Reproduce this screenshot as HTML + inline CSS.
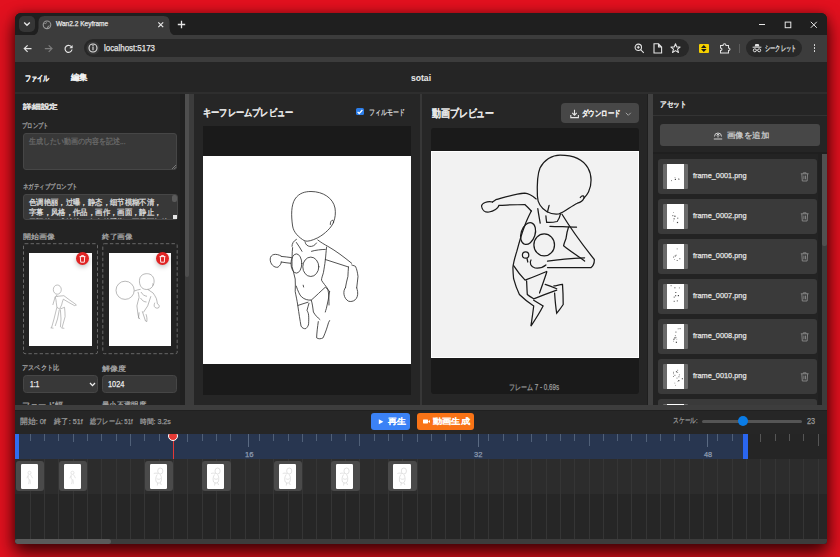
<!DOCTYPE html>
<html lang="ja"><head><meta charset="utf-8">
<style>
*{box-sizing:border-box;margin:0;padding:0}
html,body{width:840px;height:557px;overflow:hidden}
body{background:#e2111f;font-family:"Liberation Sans",sans-serif;position:relative;color:#ddd}
.a{position:absolute}
.t{position:absolute;white-space:pre;line-height:1;transform-origin:0 0;font-family:"Liberation Sans",sans-serif;-webkit-text-stroke:0.25px currentColor}
#win{position:absolute;left:15px;top:13px;width:812px;height:531px;background:#1f1f1f;border-radius:6px 6px 3px 3px;overflow:hidden;box-shadow:0 9px 18px 1px rgba(30,0,0,.8),0 0 9px rgba(40,0,0,.35)}
#pg{position:absolute;left:-15px;top:-13px;width:840px;height:557px}
svg{position:absolute;overflow:visible}

</style></head><body>
<div id="win"><div id="pg">
<div class="a" style="left:15px;top:13px;width:812.00px;height:22.00px;background:#1f1f1f;"></div>
<div class="a" style="left:19px;top:16px;width:16.00px;height:16.00px;background:#363636;border-radius:5px"></div>
<svg style="left:23px;top:21px" width="8" height="6"><path d="M1.2 1.5 L4 4.2 L6.8 1.5" stroke="#e6e6e6" stroke-width="1.4" fill="none"/></svg>
<svg style="left:30px;top:15px" width="150" height="21"><path d="M0 21 Q8 21 8.5 13 L8.5 7 Q8.5 1 14.5 1 L133.5 1 Q139.5 1 139.5 7 L139.5 13 Q140 21 148 21 Z" fill="#3c3c3c"/></svg>
<svg style="left:42px;top:19.5px" width="10" height="10"><circle cx="5" cy="4.8" r="3.8" fill="none" stroke="#9a9a9a" stroke-width="1.1"/><path d="M2.2 3.2 Q4 4 4.8 2.5 M5.5 8.3 Q5.3 6 7.5 5.8" stroke="#9a9a9a" stroke-width="1" fill="none"/></svg>
<svg style="left:157px;top:20.5px" width="8" height="8"><path d="M1.3 1.3 L6.2 6.2 M6.2 1.3 L1.3 6.2" stroke="#e6e6e6" stroke-width="1.2"/></svg>
<svg style="left:176.5px;top:19.5px" width="9" height="9"><path d="M4.5 0.8 V8.2 M0.8 4.5 H8.2" stroke="#e6e6e6" stroke-width="1.3"/></svg>
<div class="a" style="left:759px;top:23.5px;width:6.00px;height:1.10px;background:#e6e6e6;"></div>
<svg style="left:784px;top:20.5px" width="8" height="8"><rect x="1.2" y="1.1" width="5.6" height="5.6" fill="none" stroke="#e6e6e6" stroke-width="1"/></svg>
<svg style="left:810px;top:20.5px" width="8" height="8"><path d="M0.8 0.8 L6.8 6.8 M6.8 0.8 L0.8 6.8" stroke="#e6e6e6" stroke-width="1"/></svg>
<div class="a" style="left:15px;top:35px;width:812.00px;height:27.00px;background:#3c3c3c;"></div>
<svg style="left:23px;top:44px" width="10" height="10"><path d="M8.5 4.6 H1.5 M4.6 1.3 L1.3 4.6 L4.6 7.9" stroke="#e3e3e3" stroke-width="1.2" fill="none"/></svg>
<svg style="left:44px;top:44px" width="10" height="10"><path d="M0.8 4.6 H7.8 M4.7 1.3 L8 4.6 L4.7 7.9" stroke="#7c7c7c" stroke-width="1.2" fill="none"/></svg>
<svg style="left:64px;top:44px" width="10" height="10"><path d="M7.8 3.6 A3.5 3.5 0 1 0 8 5.5" stroke="#e3e3e3" stroke-width="1.2" fill="none"/><path d="M8.6 0.9 V4.2 H5.3 Z" fill="#e3e3e3"/></svg>
<div class="a" style="left:83.8px;top:39px;width:605.50px;height:18.40px;background:#282828;border-radius:9.5px"></div>
<svg style="left:86px;top:41.2px" width="14" height="14"><circle cx="7" cy="7" r="6.6" fill="#383838"/><circle cx="7" cy="7" r="4" fill="none" stroke="#e3e3e3" stroke-width="1.1"/><path d="M7 5.6 V9.2" stroke="#e3e3e3" stroke-width="1.1"/><circle cx="7" cy="4.4" r="0.6" fill="#e3e3e3"/></svg>
<svg style="left:634px;top:43px" width="11" height="11"><circle cx="4.3" cy="4.3" r="3.2" fill="none" stroke="#e3e3e3" stroke-width="1.1"/><path d="M6.6 6.6 L9.8 9.8 M2.8 4.3 H5.8 M4.3 2.8 V5.8" stroke="#e3e3e3" stroke-width="1.1"/></svg>
<svg style="left:653px;top:43px" width="10" height="11"><path d="M1 0.8 H5.5 L8.6 3.9 V10 H1 Z M5.5 0.8 V3.9 H8.6" fill="none" stroke="#e3e3e3" stroke-width="1.1"/></svg>
<svg style="left:670px;top:43px" width="11" height="11"><path d="M5.5 0.8 L6.8 4 L10.1 4.1 L7.5 6.2 L8.5 9.5 L5.5 7.6 L2.5 9.5 L3.5 6.2 L0.9 4.1 L4.2 4 Z" fill="none" stroke="#e3e3e3" stroke-width="1.05" stroke-linejoin="round"/></svg>
<div class="a" style="left:699.3px;top:43.9px;width:9.60px;height:9.00px;background:#f5d000;border-radius:1px"></div>
<svg style="left:699.3px;top:43.9px" width="10" height="9"><path d="M4.8 1 L7.6 4 H2 Z M2 5 H7.6 L4.8 8 Z" fill="#1a1a1a"/><path d="M1.5 4.5 H8.1" stroke="#f5d000" stroke-width="0.6"/></svg>
<svg style="left:719px;top:43px" width="12" height="11"><path d="M1.5 2.5 H4 Q4 0.8 5.5 0.8 Q7 0.8 7 2.5 H9.5 V5 Q11 5 11 6.3 Q11 7.6 9.5 7.6 V10 H1.5 V7.6 Q3 7.6 3 6.3 Q3 5 1.5 5 Z" fill="none" stroke="#e3e3e3" stroke-width="1.05"/></svg>
<div class="a" style="left:739.2px;top:44px;width:1.00px;height:9.00px;background:#5a5a5a;"></div>
<div class="a" style="left:745.6px;top:39px;width:56.30px;height:18.40px;background:#282828;border-radius:9.5px"></div>
<svg style="left:752px;top:43px" width="10" height="10"><path d="M2.6 3.5 L3.4 0.9 H6.6 L7.4 3.5 Z" fill="#e3e3e3"/><rect x="0.6" y="3.7" width="8.8" height="1" fill="#e3e3e3"/><circle cx="2.8" cy="7.3" r="1.5" fill="none" stroke="#e3e3e3" stroke-width="1"/><circle cx="7.2" cy="7.3" r="1.5" fill="none" stroke="#e3e3e3" stroke-width="1"/><path d="M4.3 7.1 H5.7" stroke="#e3e3e3" stroke-width="0.9"/></svg>
<div class="a" style="left:813.6px;top:44.300000000000004px;width:1.8px;height:1.8px;border-radius:1px;background:#e3e3e3"></div>
<div class="a" style="left:813.6px;top:47.300000000000004px;width:1.8px;height:1.8px;border-radius:1px;background:#e3e3e3"></div>
<div class="a" style="left:813.6px;top:50.4px;width:1.8px;height:1.8px;border-radius:1px;background:#e3e3e3"></div>
<div class="a" style="left:15px;top:62px;width:812.00px;height:30.00px;background:#252525;"></div>
<div class="a" style="left:15px;top:92px;width:812.00px;height:2.00px;background:#2e2e2e;"></div>
<div class="a" style="left:15px;top:94px;width:170.00px;height:311.00px;background:#232323;"></div>
<div class="a" style="left:179.5px;top:94px;width:5.50px;height:311.00px;background:#202020;"></div>
<div class="a" style="left:184.5px;top:94px;width:9.50px;height:311.00px;background:#3c3c3c;"></div>
<div class="a" style="left:184.5px;top:94px;width:4.80px;height:183.00px;background:#4e4e4e;border-radius:0 0 2.5px 2.5px"></div>
<div class="a" style="left:22.9px;top:132.9px;width:154.60px;height:37.30px;background:#383838;border:1px solid #464646;border-radius:3px"></div>
<svg style="left:171px;top:164px" width="6" height="6"><path d="M5 1 L1 5 M5 3.2 L3.2 5" stroke="#8a8a8a" stroke-width="0.8"/></svg>
<div class="a" style="left:22.7px;top:194.2px;width:154.90px;height:25.70px;background:#383838;border:1px solid #464646;border-radius:3px"></div>
<div class="a" style="left:23.7px;top:195px;width:147.5px;height:24.3px;overflow:hidden"><div class="t" style="left:5.100000000000001px;top:3.90px;font-size:8px;color:#e0e0e0;transform:scaleX(0.919)">色调艳丽，过曝，静态，细节模糊不清，</div><div class="t" style="left:5.100000000000001px;top:14.10px;font-size:8px;color:#e0e0e0;transform:scaleX(0.919)">字幕，风格，作品，画作，画面，静止，</div><div class="t" style="left:5.100000000000001px;top:24.30px;font-size:8px;color:#e0e0e0;transform:scaleX(0.919)">丑陋的，残缺的，多余的手指，画得不好的</div></div>
<div class="a" style="left:172px;top:195.2px;width:5.00px;height:7.10px;background:#5a5a5a;border-radius:2px"></div>
<div class="a" style="left:172.5px;top:214.8px;width:4.50px;height:4.70px;background:#e6e6e6;"></div>
<svg style="left:0;top:0" width="840" height="557"><rect x="23.5" y="243.7" width="74" height="110" rx="1.5" fill="none" stroke="#686868" stroke-width="1" stroke-dasharray="3.4 2.2"/><rect x="102.8" y="243.7" width="74.4" height="110" rx="1.5" fill="none" stroke="#686868" stroke-width="1" stroke-dasharray="3.4 2.2"/></svg>
<div class="a" style="left:29px;top:253.4px;width:62.50px;height:92.60px;background:#ffffff;"></div>
<div class="a" style="left:108.7px;top:253.4px;width:62.50px;height:92.60px;background:#ffffff;"></div>
<div class="a" style="left:76.4px;top:252.2px;width:13px;height:13px;border-radius:50%;background:#e02424;box-shadow:0 2px 5px rgba(0,0,0,.25)"></div>
<svg style="left:79.4px;top:254.7px" width="7" height="8"><path d="M0.6 1.6 H6.4 M2.4 1.6 V0.6 H4.6 V1.6 M1.3 1.6 L1.7 7.2 H5.3 L5.7 1.6" fill="none" stroke="#fff" stroke-width="0.9"/></svg>
<div class="a" style="left:156.1px;top:252.2px;width:13px;height:13px;border-radius:50%;background:#e02424;box-shadow:0 2px 5px rgba(0,0,0,.25)"></div>
<svg style="left:159.1px;top:254.7px" width="7" height="8"><path d="M0.6 1.6 H6.4 M2.4 1.6 V0.6 H4.6 V1.6 M1.3 1.6 L1.7 7.2 H5.3 L5.7 1.6" fill="none" stroke="#fff" stroke-width="0.9"/></svg>
<div class="a" style="left:22.9px;top:375.4px;width:75.00px;height:17.20px;background:#383838;border:1px solid #464646;border-radius:3.5px"></div>
<svg style="left:88.5px;top:381.5px" width="7" height="5"><path d="M1 1 L3.5 3.6 L6 1" stroke="#f0f0f0" stroke-width="1.3" fill="none"/></svg>
<div class="a" style="left:102.4px;top:375.4px;width:75.10px;height:17.20px;background:#383838;border:1px solid #464646;border-radius:3.5px"></div>
<div class="a" style="left:194px;top:94px;width:225.60px;height:311.00px;background:#262626;"></div>
<div class="a" style="left:203.3px;top:125.5px;width:207.90px;height:269.20px;background:#1a1a1a;"></div>
<div class="a" style="left:203.3px;top:156px;width:207.90px;height:208.00px;background:#ffffff;"></div>
<div class="a" style="left:356px;top:108.1px;width:7.80px;height:7.30px;background:#2b7de9;border-radius:1.5px"></div>
<svg style="left:356px;top:108.1px" width="8" height="8"><path d="M1.6 3.8 L3.2 5.5 L6.4 2" stroke="#fff" stroke-width="1.2" fill="none"/></svg>
<div class="a" style="left:419.6px;top:94px;width:2.80px;height:311.00px;background:#2a2a2a;"></div>
<div class="a" style="left:420.2px;top:94px;width:1.60px;height:311.00px;background:#373737;"></div>
<div class="a" style="left:422.4px;top:94px;width:225.00px;height:311.00px;background:#262626;"></div>
<div class="a" style="left:561.2px;top:103.2px;width:77.60px;height:19.80px;background:#474747;border-radius:4px"></div>
<svg style="left:569.5px;top:108.5px" width="10" height="10"><path d="M4.5 0.8 V6 M2.2 3.8 L4.5 6.1 L6.8 3.8 M0.8 6 V8.6 H8.4 V6" fill="none" stroke="#e6e6e6" stroke-width="1.1"/></svg>
<svg style="left:624.5px;top:111.5px" width="7" height="5"><path d="M0.8 0.8 L3.3 3.3 L5.8 0.8" stroke="#aaa" stroke-width="0.9" fill="none"/></svg>
<div class="a" style="left:431.2px;top:128px;width:207.40px;height:266.30px;background:#1a1a1a;border-radius:3px"></div>
<div class="a" style="left:431.3px;top:151px;width:207.30px;height:206.80px;background:#f2f2f2;border:1px solid #fff"></div>
<div class="a" style="left:647.6px;top:94px;width:5.40px;height:311.00px;background:#414141;"></div>
<div class="a" style="left:653px;top:94px;width:174.00px;height:311.00px;background:#252525;"></div>
<div class="a" style="left:652.8px;top:115.3px;width:174.20px;height:1.00px;background:#333333;"></div>
<div class="a" style="left:660px;top:123.7px;width:159.60px;height:22.10px;background:#474747;border-radius:3px"></div>
<svg style="left:712.5px;top:131px" width="10" height="9"><path d="M1.5 5.5 A3.5 3.5 0 0 1 8.5 5.5" fill="none" stroke="#d0d0d0" stroke-width="1"/><path d="M5 3 V6.5 M3.6 4.4 L5 3 L6.4 4.4 M0.8 8 H9.2" fill="none" stroke="#d0d0d0" stroke-width="1"/></svg>
<div class="a" style="left:652.8px;top:152.3px;width:174.20px;height:1.30px;background:#1f1f1f;"></div>
<div class="a" style="left:652.8px;top:153.6px;width:174.20px;height:251.40px;background:#232323;"></div>
<div class="a" style="left:817.5px;top:153.6px;width:4.90px;height:251.40px;background:#202020;"></div>
<div class="a" style="left:822.4px;top:153.6px;width:4.60px;height:251.40px;background:#3c3c3c;"></div>
<div class="a" style="left:822.4px;top:154px;width:4.40px;height:91.80px;background:#505050;border-radius:0 0 2px 2px"></div>
<div class="a" style="left:658px;top:159px;width:159.00px;height:34.50px;background:#3a3a3a;border-radius:3px"></div>
<div class="a" style="left:663.2px;top:163.7px;width:25.00px;height:25.00px;background:#6a6a6a;border-radius:1px"></div>
<div class="a" style="left:666.9px;top:163.7px;width:17.20px;height:25.00px;background:#ffffff;"></div>
<svg style="left:800px;top:172px" width="10" height="10"><path d="M0.8 1.8 H8.6 M3.3 1.8 V0.8 H6.1 V1.8 M1.8 1.8 L2.3 9 H7.1 L7.6 1.8 M3.9 3.6 V7.3 M5.5 3.6 V7.3" fill="none" stroke="#8a8a8a" stroke-width="0.9"/></svg>
<div class="a" style="left:658px;top:199px;width:159.00px;height:34.50px;background:#3a3a3a;border-radius:3px"></div>
<div class="a" style="left:663.2px;top:203.7px;width:25.00px;height:25.00px;background:#6a6a6a;border-radius:1px"></div>
<div class="a" style="left:666.9px;top:203.7px;width:17.20px;height:25.00px;background:#ffffff;"></div>
<svg style="left:800px;top:212px" width="10" height="10"><path d="M0.8 1.8 H8.6 M3.3 1.8 V0.8 H6.1 V1.8 M1.8 1.8 L2.3 9 H7.1 L7.6 1.8 M3.9 3.6 V7.3 M5.5 3.6 V7.3" fill="none" stroke="#8a8a8a" stroke-width="0.9"/></svg>
<div class="a" style="left:658px;top:239px;width:159.00px;height:34.50px;background:#3a3a3a;border-radius:3px"></div>
<div class="a" style="left:663.2px;top:243.7px;width:25.00px;height:25.00px;background:#6a6a6a;border-radius:1px"></div>
<div class="a" style="left:666.9px;top:243.7px;width:17.20px;height:25.00px;background:#ffffff;"></div>
<svg style="left:800px;top:252px" width="10" height="10"><path d="M0.8 1.8 H8.6 M3.3 1.8 V0.8 H6.1 V1.8 M1.8 1.8 L2.3 9 H7.1 L7.6 1.8 M3.9 3.6 V7.3 M5.5 3.6 V7.3" fill="none" stroke="#8a8a8a" stroke-width="0.9"/></svg>
<div class="a" style="left:658px;top:279px;width:159.00px;height:34.50px;background:#3a3a3a;border-radius:3px"></div>
<div class="a" style="left:663.2px;top:283.7px;width:25.00px;height:25.00px;background:#6a6a6a;border-radius:1px"></div>
<div class="a" style="left:666.9px;top:283.7px;width:17.20px;height:25.00px;background:#ffffff;"></div>
<svg style="left:800px;top:292px" width="10" height="10"><path d="M0.8 1.8 H8.6 M3.3 1.8 V0.8 H6.1 V1.8 M1.8 1.8 L2.3 9 H7.1 L7.6 1.8 M3.9 3.6 V7.3 M5.5 3.6 V7.3" fill="none" stroke="#8a8a8a" stroke-width="0.9"/></svg>
<div class="a" style="left:658px;top:319px;width:159.00px;height:34.50px;background:#3a3a3a;border-radius:3px"></div>
<div class="a" style="left:663.2px;top:323.7px;width:25.00px;height:25.00px;background:#6a6a6a;border-radius:1px"></div>
<div class="a" style="left:666.9px;top:323.7px;width:17.20px;height:25.00px;background:#ffffff;"></div>
<svg style="left:800px;top:332px" width="10" height="10"><path d="M0.8 1.8 H8.6 M3.3 1.8 V0.8 H6.1 V1.8 M1.8 1.8 L2.3 9 H7.1 L7.6 1.8 M3.9 3.6 V7.3 M5.5 3.6 V7.3" fill="none" stroke="#8a8a8a" stroke-width="0.9"/></svg>
<div class="a" style="left:658px;top:359px;width:159.00px;height:34.50px;background:#3a3a3a;border-radius:3px"></div>
<div class="a" style="left:663.2px;top:363.7px;width:25.00px;height:25.00px;background:#6a6a6a;border-radius:1px"></div>
<div class="a" style="left:666.9px;top:363.7px;width:17.20px;height:25.00px;background:#ffffff;"></div>
<svg style="left:800px;top:372px" width="10" height="10"><path d="M0.8 1.8 H8.6 M3.3 1.8 V0.8 H6.1 V1.8 M1.8 1.8 L2.3 9 H7.1 L7.6 1.8 M3.9 3.6 V7.3 M5.5 3.6 V7.3" fill="none" stroke="#8a8a8a" stroke-width="0.9"/></svg>
<div class="a" style="left:658px;top:399px;width:159.00px;height:34.50px;background:#3a3a3a;border-radius:3px"></div>
<div class="a" style="left:663.2px;top:403.7px;width:25.00px;height:25.00px;background:#6a6a6a;border-radius:1px"></div>
<div class="a" style="left:666.9px;top:403.7px;width:17.20px;height:25.00px;background:#ffffff;"></div>
<svg style="left:800px;top:412px" width="10" height="10"><path d="M0.8 1.8 H8.6 M3.3 1.8 V0.8 H6.1 V1.8 M1.8 1.8 L2.3 9 H7.1 L7.6 1.8 M3.9 3.6 V7.3 M5.5 3.6 V7.3" fill="none" stroke="#8a8a8a" stroke-width="0.9"/></svg>
<div class="a" style="left:15px;top:405px;width:812.00px;height:4.50px;background:#3d3d3d;"></div>
<div class="a" style="left:15px;top:409.5px;width:812.00px;height:24.50px;background:#262626;"></div>
<div class="a" style="left:15px;top:409.5px;width:812.00px;height:1.50px;background:#202020;"></div>
<div class="a" style="left:371.25px;top:412.75px;width:38.75px;height:17.50px;background:#3b82f6;border-radius:3px"></div>
<svg style="left:377.5px;top:418.5px" width="6" height="6"><path d="M0.8 0.3 L5.4 2.8 L0.8 5.3 Z" fill="#fff"/></svg>
<div class="a" style="left:417.25px;top:412.75px;width:56.50px;height:17.50px;background:#f97316;border-radius:3px"></div>
<svg style="left:423px;top:419px" width="8" height="5"><rect x="0" y="0.4" width="5" height="4" rx="0.6" fill="#fff"/><path d="M5 2.4 L7 0.9 V3.9 Z" fill="#fff"/></svg>
<div class="a" style="left:702.1px;top:419.6px;width:99.60px;height:3.60px;background:#555555;border-radius:2px"></div>
<div class="a" style="left:738px;top:416.1px;width:10px;height:10px;border-radius:50%;background:#0a7ce6"></div>
<div class="a" style="left:15px;top:434px;width:812.00px;height:24.50px;background:#252525;"></div>
<div class="a" style="left:15px;top:434px;width:728.00px;height:24.50px;background:#283650;"></div>
<div class="a" style="left:15.3px;top:434px;width:1.00px;height:12.30px;background:#506078;"></div>
<div class="a" style="left:29.63px;top:434px;width:1.00px;height:6.60px;background:#506078;"></div>
<div class="a" style="left:43.96px;top:434px;width:1.00px;height:6.60px;background:#506078;"></div>
<div class="a" style="left:58.29px;top:434px;width:1.00px;height:6.60px;background:#506078;"></div>
<div class="a" style="left:72.62px;top:434px;width:1.00px;height:8.00px;background:#506078;"></div>
<div class="a" style="left:86.95px;top:434px;width:1.00px;height:6.60px;background:#506078;"></div>
<div class="a" style="left:101.28px;top:434px;width:1.00px;height:6.60px;background:#506078;"></div>
<div class="a" style="left:115.61px;top:434px;width:1.00px;height:6.60px;background:#506078;"></div>
<div class="a" style="left:129.94px;top:434px;width:1.00px;height:12.30px;background:#506078;"></div>
<div class="a" style="left:144.27px;top:434px;width:1.00px;height:6.60px;background:#506078;"></div>
<div class="a" style="left:158.6px;top:434px;width:1.00px;height:6.60px;background:#506078;"></div>
<div class="a" style="left:172.93px;top:434px;width:1.00px;height:6.60px;background:#506078;"></div>
<div class="a" style="left:187.26px;top:434px;width:1.00px;height:8.00px;background:#506078;"></div>
<div class="a" style="left:201.59px;top:434px;width:1.00px;height:6.60px;background:#506078;"></div>
<div class="a" style="left:215.92px;top:434px;width:1.00px;height:6.60px;background:#506078;"></div>
<div class="a" style="left:230.25px;top:434px;width:1.00px;height:6.60px;background:#506078;"></div>
<div class="a" style="left:258.91px;top:434px;width:1.00px;height:6.60px;background:#506078;"></div>
<div class="a" style="left:273.24px;top:434px;width:1.00px;height:6.60px;background:#506078;"></div>
<div class="a" style="left:287.57px;top:434px;width:1.00px;height:6.60px;background:#506078;"></div>
<div class="a" style="left:301.9px;top:434px;width:1.00px;height:8.00px;background:#506078;"></div>
<div class="a" style="left:316.23px;top:434px;width:1.00px;height:6.60px;background:#506078;"></div>
<div class="a" style="left:330.56px;top:434px;width:1.00px;height:6.60px;background:#506078;"></div>
<div class="a" style="left:344.89px;top:434px;width:1.00px;height:6.60px;background:#506078;"></div>
<div class="a" style="left:359.22px;top:434px;width:1.00px;height:12.30px;background:#506078;"></div>
<div class="a" style="left:373.55px;top:434px;width:1.00px;height:6.60px;background:#506078;"></div>
<div class="a" style="left:387.88px;top:434px;width:1.00px;height:6.60px;background:#506078;"></div>
<div class="a" style="left:402.21px;top:434px;width:1.00px;height:6.60px;background:#506078;"></div>
<div class="a" style="left:416.54px;top:434px;width:1.00px;height:8.00px;background:#506078;"></div>
<div class="a" style="left:430.87px;top:434px;width:1.00px;height:6.60px;background:#506078;"></div>
<div class="a" style="left:445.2px;top:434px;width:1.00px;height:6.60px;background:#506078;"></div>
<div class="a" style="left:459.53px;top:434px;width:1.00px;height:6.60px;background:#506078;"></div>
<div class="a" style="left:488.19px;top:434px;width:1.00px;height:6.60px;background:#506078;"></div>
<div class="a" style="left:502.52px;top:434px;width:1.00px;height:6.60px;background:#506078;"></div>
<div class="a" style="left:516.85px;top:434px;width:1.00px;height:6.60px;background:#506078;"></div>
<div class="a" style="left:531.18px;top:434px;width:1.00px;height:8.00px;background:#506078;"></div>
<div class="a" style="left:545.51px;top:434px;width:1.00px;height:6.60px;background:#506078;"></div>
<div class="a" style="left:559.84px;top:434px;width:1.00px;height:6.60px;background:#506078;"></div>
<div class="a" style="left:574.17px;top:434px;width:1.00px;height:6.60px;background:#506078;"></div>
<div class="a" style="left:588.5px;top:434px;width:1.00px;height:12.30px;background:#506078;"></div>
<div class="a" style="left:602.83px;top:434px;width:1.00px;height:6.60px;background:#506078;"></div>
<div class="a" style="left:617.16px;top:434px;width:1.00px;height:6.60px;background:#506078;"></div>
<div class="a" style="left:631.49px;top:434px;width:1.00px;height:6.60px;background:#506078;"></div>
<div class="a" style="left:645.82px;top:434px;width:1.00px;height:8.00px;background:#506078;"></div>
<div class="a" style="left:660.15px;top:434px;width:1.00px;height:6.60px;background:#506078;"></div>
<div class="a" style="left:674.48px;top:434px;width:1.00px;height:6.60px;background:#506078;"></div>
<div class="a" style="left:688.81px;top:434px;width:1.00px;height:6.60px;background:#506078;"></div>
<div class="a" style="left:717.47px;top:434px;width:1.00px;height:6.60px;background:#506078;"></div>
<div class="a" style="left:731.8px;top:434px;width:1.00px;height:6.60px;background:#506078;"></div>
<div class="a" style="left:760.46px;top:434px;width:1.00px;height:8.00px;background:#555555;"></div>
<div class="a" style="left:774.79px;top:434px;width:1.00px;height:6.60px;background:#555555;"></div>
<div class="a" style="left:789.12px;top:434px;width:1.00px;height:6.60px;background:#555555;"></div>
<div class="a" style="left:803.45px;top:434px;width:1.00px;height:6.60px;background:#555555;"></div>
<div class="a" style="left:817.78px;top:434px;width:1.00px;height:12.30px;background:#555555;"></div>
<div class="a" style="left:248.1px;top:434px;width:1.00px;height:12.80px;background:#5a6a82;"></div>
<div class="a" style="left:477.5px;top:434px;width:1.00px;height:12.80px;background:#5a6a82;"></div>
<div class="a" style="left:706.8px;top:434px;width:1.00px;height:12.80px;background:#5a6a82;"></div>
<div class="a" style="left:15px;top:434px;width:3.70px;height:24.50px;background:#2f6df0;"></div>
<div class="a" style="left:742.9px;top:434px;width:5.30px;height:24.50px;background:#2a66f0;"></div>
<div class="a" style="left:15px;top:458.5px;width:812.00px;height:35.00px;background:#2c2c2c;"></div>
<div class="a" style="left:15px;top:493.5px;width:812.00px;height:45.50px;background:#262626;"></div>
<div class="a" style="left:29.63px;top:458.5px;width:1.00px;height:80.50px;background:#353535;"></div>
<div class="a" style="left:43.96px;top:458.5px;width:1.00px;height:80.50px;background:#353535;"></div>
<div class="a" style="left:58.29px;top:458.5px;width:1.00px;height:80.50px;background:#353535;"></div>
<div class="a" style="left:72.62px;top:458.5px;width:1.00px;height:80.50px;background:#353535;"></div>
<div class="a" style="left:86.95px;top:458.5px;width:1.00px;height:80.50px;background:#353535;"></div>
<div class="a" style="left:101.28px;top:458.5px;width:1.00px;height:80.50px;background:#353535;"></div>
<div class="a" style="left:115.61px;top:458.5px;width:1.00px;height:80.50px;background:#353535;"></div>
<div class="a" style="left:129.94px;top:458.5px;width:1.00px;height:80.50px;background:#353535;"></div>
<div class="a" style="left:144.27px;top:458.5px;width:1.00px;height:80.50px;background:#353535;"></div>
<div class="a" style="left:158.6px;top:458.5px;width:1.00px;height:80.50px;background:#353535;"></div>
<div class="a" style="left:172.93px;top:458.5px;width:1.00px;height:80.50px;background:#353535;"></div>
<div class="a" style="left:187.26px;top:458.5px;width:1.00px;height:80.50px;background:#353535;"></div>
<div class="a" style="left:201.59px;top:458.5px;width:1.00px;height:80.50px;background:#353535;"></div>
<div class="a" style="left:215.92px;top:458.5px;width:1.00px;height:80.50px;background:#353535;"></div>
<div class="a" style="left:230.25px;top:458.5px;width:1.00px;height:80.50px;background:#353535;"></div>
<div class="a" style="left:244.58px;top:458.5px;width:1.00px;height:80.50px;background:#353535;"></div>
<div class="a" style="left:258.91px;top:458.5px;width:1.00px;height:80.50px;background:#353535;"></div>
<div class="a" style="left:273.24px;top:458.5px;width:1.00px;height:80.50px;background:#353535;"></div>
<div class="a" style="left:287.57px;top:458.5px;width:1.00px;height:80.50px;background:#353535;"></div>
<div class="a" style="left:301.9px;top:458.5px;width:1.00px;height:80.50px;background:#353535;"></div>
<div class="a" style="left:316.23px;top:458.5px;width:1.00px;height:80.50px;background:#353535;"></div>
<div class="a" style="left:330.56px;top:458.5px;width:1.00px;height:80.50px;background:#353535;"></div>
<div class="a" style="left:344.89px;top:458.5px;width:1.00px;height:80.50px;background:#353535;"></div>
<div class="a" style="left:359.22px;top:458.5px;width:1.00px;height:80.50px;background:#353535;"></div>
<div class="a" style="left:373.55px;top:458.5px;width:1.00px;height:80.50px;background:#353535;"></div>
<div class="a" style="left:387.88px;top:458.5px;width:1.00px;height:80.50px;background:#353535;"></div>
<div class="a" style="left:402.21px;top:458.5px;width:1.00px;height:80.50px;background:#353535;"></div>
<div class="a" style="left:416.54px;top:458.5px;width:1.00px;height:80.50px;background:#353535;"></div>
<div class="a" style="left:430.87px;top:458.5px;width:1.00px;height:80.50px;background:#353535;"></div>
<div class="a" style="left:445.2px;top:458.5px;width:1.00px;height:80.50px;background:#353535;"></div>
<div class="a" style="left:459.53px;top:458.5px;width:1.00px;height:80.50px;background:#353535;"></div>
<div class="a" style="left:473.86px;top:458.5px;width:1.00px;height:80.50px;background:#353535;"></div>
<div class="a" style="left:488.19px;top:458.5px;width:1.00px;height:80.50px;background:#353535;"></div>
<div class="a" style="left:502.52px;top:458.5px;width:1.00px;height:80.50px;background:#353535;"></div>
<div class="a" style="left:516.85px;top:458.5px;width:1.00px;height:80.50px;background:#353535;"></div>
<div class="a" style="left:531.18px;top:458.5px;width:1.00px;height:80.50px;background:#353535;"></div>
<div class="a" style="left:545.51px;top:458.5px;width:1.00px;height:80.50px;background:#353535;"></div>
<div class="a" style="left:559.84px;top:458.5px;width:1.00px;height:80.50px;background:#353535;"></div>
<div class="a" style="left:574.17px;top:458.5px;width:1.00px;height:80.50px;background:#353535;"></div>
<div class="a" style="left:588.5px;top:458.5px;width:1.00px;height:80.50px;background:#353535;"></div>
<div class="a" style="left:602.83px;top:458.5px;width:1.00px;height:80.50px;background:#353535;"></div>
<div class="a" style="left:617.16px;top:458.5px;width:1.00px;height:80.50px;background:#353535;"></div>
<div class="a" style="left:631.49px;top:458.5px;width:1.00px;height:80.50px;background:#353535;"></div>
<div class="a" style="left:645.82px;top:458.5px;width:1.00px;height:80.50px;background:#353535;"></div>
<div class="a" style="left:660.15px;top:458.5px;width:1.00px;height:80.50px;background:#353535;"></div>
<div class="a" style="left:674.48px;top:458.5px;width:1.00px;height:80.50px;background:#353535;"></div>
<div class="a" style="left:688.81px;top:458.5px;width:1.00px;height:80.50px;background:#353535;"></div>
<div class="a" style="left:703.14px;top:458.5px;width:1.00px;height:80.50px;background:#353535;"></div>
<div class="a" style="left:717.47px;top:458.5px;width:1.00px;height:80.50px;background:#353535;"></div>
<div class="a" style="left:731.8px;top:458.5px;width:1.00px;height:80.50px;background:#353535;"></div>
<div class="a" style="left:746.13px;top:458.5px;width:1.00px;height:80.50px;background:#353535;"></div>
<div class="a" style="left:760.46px;top:458.5px;width:1.00px;height:80.50px;background:#353535;"></div>
<div class="a" style="left:774.79px;top:458.5px;width:1.00px;height:80.50px;background:#353535;"></div>
<div class="a" style="left:789.12px;top:458.5px;width:1.00px;height:80.50px;background:#353535;"></div>
<div class="a" style="left:803.45px;top:458.5px;width:1.00px;height:80.50px;background:#353535;"></div>
<div class="a" style="left:817.78px;top:458.5px;width:1.00px;height:80.50px;background:#353535;"></div>
<div class="a" style="left:15.8px;top:461.4px;width:28.60px;height:30.00px;background:#4a4a4a;border-radius:3px"></div>
<div class="a" style="left:20.8px;top:463.6px;width:17.40px;height:25.60px;background:#ffffff;border-radius:1.2px"></div>
<div class="a" style="left:58.79px;top:461.4px;width:28.60px;height:30.00px;background:#4a4a4a;border-radius:3px"></div>
<div class="a" style="left:63.79px;top:463.6px;width:17.40px;height:25.60px;background:#ffffff;border-radius:1.2px"></div>
<div class="a" style="left:144.77px;top:461.4px;width:28.60px;height:30.00px;background:#4a4a4a;border-radius:3px"></div>
<div class="a" style="left:149.77px;top:463.6px;width:17.40px;height:25.60px;background:#ffffff;border-radius:1.2px"></div>
<div class="a" style="left:202.09px;top:461.4px;width:28.60px;height:30.00px;background:#4a4a4a;border-radius:3px"></div>
<div class="a" style="left:207.09px;top:463.6px;width:17.40px;height:25.60px;background:#ffffff;border-radius:1.2px"></div>
<div class="a" style="left:273.74px;top:461.4px;width:28.60px;height:30.00px;background:#4a4a4a;border-radius:3px"></div>
<div class="a" style="left:278.74px;top:463.6px;width:17.40px;height:25.60px;background:#ffffff;border-radius:1.2px"></div>
<div class="a" style="left:331.06px;top:461.4px;width:28.60px;height:30.00px;background:#4a4a4a;border-radius:3px"></div>
<div class="a" style="left:336.06px;top:463.6px;width:17.40px;height:25.60px;background:#ffffff;border-radius:1.2px"></div>
<div class="a" style="left:388.38px;top:461.4px;width:28.60px;height:30.00px;background:#4a4a4a;border-radius:3px"></div>
<div class="a" style="left:393.38px;top:463.6px;width:17.40px;height:25.60px;background:#ffffff;border-radius:1.2px"></div>
<svg class="a" style="left:0;top:0" width="840" height="557" viewBox="0 0 840 557"><defs><clipPath id="ckf"><rect x="203.5" y="156" width="207.7" height="208"/></clipPath><clipPath id="cvid"><rect x="431.3" y="151" width="207.3" height="206.8"/></clipPath></defs><g clip-path="url(#ckf)" fill="none" stroke="#333" stroke-width="0.85" stroke-linecap="round">
<path d="M304.8 241 C298 237 293.5 232 292.6 226 C291 215 291.2 205 295 199 C299 193 305 191.5 311 191.5 C323 191.5 333 198 335 208 C335.8 213 335.3 218 333.5 222 C332 227 325 234 317.7 237.8 C312 240.5 308 241.8 304.8 241"/>
<path d="M330.3 224.5 C330 219.5 334.2 218.8 333.6 222.8"/>
<path d="M296.4 239.4 C293.5 241 292 243.5 292 246.3"/>
<path d="M305.2 242.5 C306 247 313 248.5 316.5 243"/>
<path d="M296.4 242.5 C298.5 245.5 300.5 248.5 302 251.3"/>
<path d="M317.8 240 C321 242.5 324.5 244.5 327.8 246.3 C336 251 344 257 351.7 263.3"/>
<path d="M311.5 251.3 C316 250 321 249.5 325.3 249.4"/>
<path d="M326.6 247 C326 252 325.8 256 325.3 260 C324.8 265 324 269 323.4 272.7 C322.5 276 321.5 278 321.5 280.2 C323 283 326 286 327.8 289 C329 294 329 300 329 305"/>
<path d="M325.3 259.5 C333 262 341 264.5 348.5 267"/>
<path d="M348.5 267 C348.3 270 348 273 347.9 276.5 C347 280 346 284 345.4 287.8"/>
<path d="M351.8 265 C353.5 265.6 355 266 355.5 266.4 C356.8 269 357.6 273 358 276.5 C357.8 280 357 284 356.7 287.8"/>
<path d="M345.5 287.5 C342.5 291 343.5 298.5 348.5 301.2 C353 302.5 358.6 299.5 357.6 291.5 C357.4 290 357 289 356.7 287.8"/>
<path d="M292.6 247.6 C292 253 292 260 292 266.4 C293 271 294.5 275 295.2 279 C295.5 283 295.3 287 295.2 291.5 C296 296 297 300 297.8 305.5 C299 314 300 320 301 326 C302 328 304 329 305.9 328.6 C307.5 327 308.5 325.5 308.6 323.8 C308.8 320 308.8 318 308.6 315.2 C308.5 313 307.5 311.5 307 310.3 C307.5 308 308.5 305.5 309 303.3"/>
<path d="M291.4 257.6 C288 257.2 284.5 256.6 281.3 256.4"/>
<path d="M290.8 263.3 C287.5 263 284.5 262.5 281.3 262"/>
<path d="M281 256 C276 253 270.5 254 270.2 259 C270 264 274 268 278 267.2 C280 265.5 281.5 263.5 281.3 262"/>
<ellipse cx="296.4" cy="263.5" rx="5.4" ry="9.6"/>
<ellipse cx="310.8" cy="266.8" rx="8" ry="9.7"/>
<path d="M303.2 285.2 L303.6 287"/>
<path d="M296.2 286 C298 291 299.5 295 301.6 296.9 C304.5 299.5 308 300.3 311.25 300.1 C316 296 321 291 325.3 287.2 C327 288.5 328.5 290 329.6 291.5"/>
<path d="M297.8 305.5 C301 304.5 305 303 308 302.2"/>
<path d="M311.25 300.1 C312.5 304 312.8 308 313.4 312 C315 315 317.5 317.5 319.9 319.5"/>
<path d="M329.6 291.5 C328.8 297 327.8 303 326.3 308.7 C325.8 310 325.5 311 325.3 312"/>
<path d="M318.3 321.6 C317.5 327 316.8 333 316.6 337.8 C318.5 339.2 321 339 323.1 337.8 C325.5 332.5 327.3 327 328.5 322.7 L329.6 320.6"/>
</g><g clip-path="url(#cvid)" fill="none" stroke="#1a1a1a" stroke-width="1.25" stroke-linecap="round">
<path d="M547 211.8 C541 208 537.5 203 537.4 196 C537 185 537 175 540 168 C544 160 552 155 560 155 C572 155 583 159 588 168 C592 175 592 185 588.5 192 C587 195 585 197 584 198 C583 200.5 580 202.5 577.4 203.2 C571 206 565 212 558.7 214 C554 214.5 550 213.5 547 211.8"/>
<path d="M580.3 197.5 C582 195 584.5 195.5 584 198"/>
<path d="M536.2 198.9 C532 195.5 528 193.5 524.8 193.2 C514 194 504 197.5 495.8 199.7 L492.5 202.1"/>
<path d="M492.5 202 C487 201 482 203 481.5 206 C482 210 485 212.5 489 212 C494 211.5 498 208 499 205.5"/>
<path d="M499 205.3 C508 205 516 204.6 524.8 204.5 C527 206.5 529.5 209 531.3 211"/>
<path d="M531.3 211 C529 215.5 526.5 220.5 524.8 225.5 C521.5 234 519 243 516.8 251.4 C515 257 513.5 262 512.9 267.5 C513 272 513.3 275.5 513.6 278.7 C515 284 517 289.5 519.4 294.5 C524 299 529 303 533.7 306 C533 312 532 319 530.9 326.1 C535 320 539.5 313 543.1 306 L533.7 300.2"/>
<ellipse cx="528.1" cy="233.6" rx="7" ry="11.2" transform="rotate(18 528.1 233.6)"/>
<ellipse cx="544.2" cy="244.9" rx="10.3" ry="11"/>
<circle cx="525.6" cy="255" r="3.2"/>
<path d="M527 258.5 L527.8 262"/>
<path d="M562 214.2 C571 229 582 244 594.3 259.5 C594.5 263 593 266 591.1 267.5 C577 267.5 562 267.5 547.5 267.5"/>
<path d="M547.5 261.1 C559 259.5 572 258.5 584.6 257.9"/>
<path d="M568.5 227.2 C567 231 566.5 235 566 238.5 C565 241 564 243.5 563.6 245.7 C570 251 578 256 584.6 261.1"/>
<path d="M549.9 226.3 C558 226.5 568 227 576.5 227.2"/>
<path d="M537.8 208.6 C538.5 214 539.5 219 540.2 223.1"/>
<path d="M549.1 205.3 L547.5 211.8"/>
<path d="M545.9 215.8 C546 218 546.3 220 546.7 222.3 C550 222.5 554 222.2 557.2 221.5 C559 219 560 216.5 560.4 214.2"/>
<path d="M531 260 C529 263 531 267 535 268 C539 268.5 543 267.5 545.9 265"/>
<path d="M513.6 265.7 C517 271 521 276 525.1 280.1 C532 277.5 540 274.5 546.7 271.5"/>
<path d="M526.6 280.8 C526.8 285 527 290 527.3 294.5 C529 296 531.5 297.5 533.7 298.8 C541 296 549 293 556.7 290.2"/>
<path d="M546.7 272.2 C544.5 279 542 286 539.5 293"/>
<path d="M545.2 284.4 C549 285.5 553 287 556.7 288.7"/>
<path d="M553.9 285.9 C556.5 285.5 559.5 284.8 562.5 284.4 C563 291 563.2 298 563.2 304.5 C561 308 558.5 311 556.7 313.2 C555.5 306 555 299 554.6 293"/>
</g><g fill="none" stroke="#8c8c8c" stroke-width="0.55">
<ellipse cx="57.3" cy="289.6" rx="4" ry="4.6"/>
<path d="M56.3 294.8 L57.2 296.6"/>
<path d="M55.2 296.5 C58 296.2 61 295.9 63.9 295.7 C67.5 298.5 71.5 301.5 75 303.8 L76.4 305 L74.4 305.6 C70.5 303.5 66.8 301.3 63.3 299.2"/>
<path d="M55.2 296.8 C54.3 299.5 53.5 302.3 52.8 305"/>
<path d="M55.2 296.8 C55.8 298.8 56.2 300.8 56.3 302.7 C56.5 304.2 56.8 305.8 56.9 307.3 C58 308 58.8 308.7 59.8 309.1 C61.5 308.5 63 307.9 64.5 307.3"/>
<path d="M63.3 299.2 C62.6 301.2 62 303.2 61.6 305 C61 306.2 60.4 307.4 59.8 308.5"/>
<path d="M56.9 307.3 C56 311.2 55 315.1 54 319 C53.2 321.7 52.4 324.5 51.7 327.2 L50.8 327.8 L53.5 328.2"/>
<path d="M64.5 307.3 C64.9 310.4 65.1 313.5 65.1 316.7 C64.2 320.2 63.2 323.7 62.2 327.2 L61.5 328 L64.3 328.3"/>
<path d="M59.3 309.7 C58.7 312.8 58.1 315.9 57.5 319 C56.7 321.3 55.9 323.7 55.2 326"/>
<path d="M60.4 309.7 C60.6 312.8 60.8 315.9 61 319 C60.8 321.7 60.6 324.5 60.4 327.2"/>
</g><g fill="none" stroke="#8a8a8a" stroke-width="0.6">
<circle cx="125.1" cy="290.3" r="9.1"/>
<path d="M143 288.6 C139.5 286.5 138.6 281 140.2 277.3 C142 274 145.5 273.4 148.5 273.8 C152.5 274.5 154.6 278.5 154 282.5 C153.6 285.5 151.8 288 149.5 289 C147.3 289.8 145 289.6 143 288.6"/>
<path d="M152.2 283.8 C153.4 283.6 153.5 285.4 152.4 285.8"/>
<path d="M134.3 291 C136.5 290.2 138.5 289.6 140.6 289.3"/>
<path d="M138 291.9 C138.5 293.8 138.9 295.5 139.1 297.3 C138.3 300.2 137.5 303 136.9 305.9 C137.2 308.8 137.6 311.6 138 314.5 L139.1 318.8"/>
<path d="M147.7 289.4 C149.5 290.6 151.3 291.8 153.1 293 C154.3 294.8 155.4 296.6 156.3 298.4 C156.8 300.2 157.2 302 157.4 303.8 C159 304.5 159.8 306.3 158.8 307.6 C157.6 308.6 155.2 308.2 154.4 306.6 C154 305.2 154.3 303.8 154.8 302.7"/>
<path d="M150.9 296.2 C149.9 299.4 148.8 302.7 147.7 305.9 C146.3 308 144.8 310.2 143.4 312.4"/>
<path d="M141 292 C142.3 294.5 144.5 296 147 296.3"/>
<path d="M140.5 298 C142 300.5 144.2 302 146.5 302"/>
<path d="M139.1 312.4 C138.9 314.2 138.7 316 138.5 317.7 L140 319.2"/>
<path d="M142.3 311.3 C143.4 314.5 144.5 317.8 145.5 321 L146.8 321.6 C147.2 319 146.8 316.5 146 314.2"/>
</g><g transform="translate(29.5 477) scale(0.6)" stroke="#d0d0d0" stroke-width="0.9" fill="none">
<circle cx="0" cy="-7" r="2.6"/><path d="M-2 -4 C-3 -1 -2.5 2 -1 4 C0 7 -1 10 -2 12 M1.5 -4 C3 -2 4 0 5 2 M0.5 4 C1.5 7 1.5 10 1 12 M-2 -2 C-3.5 0 -4 1 -4.5 2"/></g><g transform="translate(72.49000000000001 477) scale(0.6)" stroke="#d0d0d0" stroke-width="0.9" fill="none">
<circle cx="0" cy="-7" r="2.6"/><path d="M-2 -4 C-3 -1 -2.5 2 -1 4 C0 7 -1 10 -2 12 M1.5 -4 C3 -2 4 0 5 2 M0.5 4 C1.5 7 1.5 10 1 12 M-2 -2 C-3.5 0 -4 1 -4.5 2"/></g><g transform="translate(158.77 476.5)" stroke="#cfcfcf" stroke-width="0.6" fill="none"><ellipse cx="1.5" cy="-5.5" rx="2.6" ry="3"/><path d="M-0.5 -3 C-2 -3.5 -3.5 -3.5 -5 -3 M-1.5 -2 C-3 0 -3.5 3 -2.5 5.5 C-1 7 1 7 2 5.5 C3 3.5 3 0 1.5 -2 M-2 2 C-1 3 1 3 2 2 M-1 6 L-1.5 9 M1.5 6 L2.5 8.5"/></g><g transform="translate(216.09 476.5)" stroke="#cfcfcf" stroke-width="0.6" fill="none"><ellipse cx="1.5" cy="-5.5" rx="2.6" ry="3"/><path d="M-0.5 -3 C-2 -3.5 -3.5 -3.5 -5 -3 M-1.5 -2 C-3 0 -3.5 3 -2.5 5.5 C-1 7 1 7 2 5.5 C3 3.5 3 0 1.5 -2 M-2 2 C-1 3 1 3 2 2 M-1 6 L-1.5 9 M1.5 6 L2.5 8.5"/></g><g transform="translate(287.74 476.5)" stroke="#cfcfcf" stroke-width="0.6" fill="none"><ellipse cx="1.5" cy="-5.5" rx="2.6" ry="3"/><path d="M-0.5 -3 C-2 -3.5 -3.5 -3.5 -5 -3 M-1.5 -2 C-3 0 -3.5 3 -2.5 5.5 C-1 7 1 7 2 5.5 C3 3.5 3 0 1.5 -2 M-2 2 C-1 3 1 3 2 2 M-1 6 L-1.5 9 M1.5 6 L2.5 8.5"/></g><g transform="translate(345.06 476.5)" stroke="#cfcfcf" stroke-width="0.6" fill="none"><ellipse cx="1.5" cy="-5.5" rx="2.6" ry="3"/><path d="M-0.5 -3 C-2 -3.5 -3.5 -3.5 -5 -3 M-1.5 -2 C-3 0 -3.5 3 -2.5 5.5 C-1 7 1 7 2 5.5 C3 3.5 3 0 1.5 -2 M-2 2 C-1 3 1 3 2 2 M-1 6 L-1.5 9 M1.5 6 L2.5 8.5"/></g><g transform="translate(402.38 476.5)" stroke="#cfcfcf" stroke-width="0.6" fill="none"><ellipse cx="1.5" cy="-5.5" rx="2.6" ry="3"/><path d="M-0.5 -3 C-2 -3.5 -3.5 -3.5 -5 -3 M-1.5 -2 C-3 0 -3.5 3 -2.5 5.5 C-1 7 1 7 2 5.5 C3 3.5 3 0 1.5 -2 M-2 2 C-1 3 1 3 2 2 M-1 6 L-1.5 9 M1.5 6 L2.5 8.5"/></g><rect x="674.8" y="178.8" width="1.2" height="1.2" fill="#444"/><rect x="678.4" y="179.0" width="1.0" height="1.0" fill="#888"/><rect x="678.4" y="178.4" width="0.8" height="0.8" fill="#444"/><rect x="674.6" y="177.2" width="0.8" height="0.8" fill="#888"/><rect x="671.2" y="180.3" width="0.8" height="0.8" fill="#444"/><rect x="673.2" y="212.1" width="0.8" height="0.8" fill="#888"/><rect x="674.8" y="215.8" width="0.8" height="0.8" fill="#444"/><rect x="674.2" y="215.7" width="1.0" height="1.0" fill="#444"/><rect x="672.2" y="215.0" width="1.2" height="1.2" fill="#888"/><rect x="676.9" y="221.9" width="1.2" height="1.2" fill="#444"/><rect x="673.2" y="220.6" width="0.8" height="0.8" fill="#888"/><rect x="677.1" y="217.6" width="1.2" height="1.2" fill="#888"/><rect x="673.5" y="218.2" width="1.2" height="1.2" fill="#666"/><rect x="674.2" y="259.1" width="0.8" height="0.8" fill="#888"/><rect x="675.7" y="254.7" width="1.0" height="1.0" fill="#888"/><rect x="673.1" y="256.6" width="1.0" height="1.0" fill="#666"/><rect x="674.7" y="255.4" width="1.2" height="1.2" fill="#666"/><rect x="676.7" y="260.0" width="1.0" height="1.0" fill="#666"/><rect x="679.2" y="258.1" width="1.2" height="1.2" fill="#888"/><rect x="676.7" y="248.4" width="1.0" height="1.0" fill="#888"/><rect x="673.7" y="300.8" width="1.0" height="1.0" fill="#444"/><rect x="678.9" y="287.4" width="1.0" height="1.0" fill="#888"/><rect x="675.0" y="295.1" width="1.2" height="1.2" fill="#666"/><rect x="670.6" y="285.2" width="1.0" height="1.0" fill="#666"/><rect x="674.4" y="287.3" width="1.0" height="1.0" fill="#444"/><rect x="677.8" y="295.0" width="1.2" height="1.2" fill="#444"/><rect x="673.7" y="296.6" width="1.0" height="1.0" fill="#444"/><rect x="675.3" y="292.0" width="1.0" height="1.0" fill="#444"/><rect x="676.8" y="300.4" width="1.0" height="1.0" fill="#444"/><rect x="677.7" y="328.3" width="1.0" height="1.0" fill="#888"/><rect x="673.4" y="338.7" width="1.0" height="1.0" fill="#444"/><rect x="676.4" y="338.8" width="0.8" height="0.8" fill="#888"/><rect x="675.8" y="341.7" width="1.2" height="1.2" fill="#444"/><rect x="675.5" y="336.9" width="1.0" height="1.0" fill="#888"/><rect x="673.2" y="340.8" width="0.8" height="0.8" fill="#888"/><rect x="679.5" y="328.0" width="1.2" height="1.2" fill="#888"/><rect x="675.3" y="331.5" width="1.2" height="1.2" fill="#888"/><rect x="673.5" y="339.3" width="0.8" height="0.8" fill="#666"/><rect x="674.9" y="335.3" width="0.8" height="0.8" fill="#444"/><rect x="674.3" y="337.3" width="1.2" height="1.2" fill="#444"/><rect x="678.2" y="380.0" width="1.2" height="1.2" fill="#444"/><rect x="678.9" y="374.5" width="0.8" height="0.8" fill="#444"/><rect x="674.4" y="374.8" width="1.0" height="1.0" fill="#666"/><rect x="673.1" y="373.4" width="0.8" height="0.8" fill="#666"/><rect x="678.4" y="376.3" width="1.0" height="1.0" fill="#666"/><rect x="676.5" y="377.6" width="1.0" height="1.0" fill="#888"/><rect x="675.0" y="384.9" width="0.8" height="0.8" fill="#888"/><rect x="681.8" y="378.1" width="1.2" height="1.2" fill="#666"/><rect x="677.5" y="381.0" width="0.8" height="0.8" fill="#888"/><rect x="674.4" y="382.7" width="0.8" height="0.8" fill="#888"/><rect x="677.3" y="372.0" width="0.8" height="0.8" fill="#666"/><rect x="675.9" y="371.0" width="1.2" height="1.2" fill="#666"/><rect x="673.2" y="371.8" width="0.8" height="0.8" fill="#444"/><rect x="677.3" y="369.8" width="0.8" height="0.8" fill="#444"/><rect x="673.1" y="376.0" width="0.8" height="0.8" fill="#444"/><rect x="676.2" y="371.6" width="0.8" height="0.8" fill="#888"/></svg>
<div class="a" style="left:172.9px;top:434px;width:1.00px;height:24.50px;background:#e53935;"></div>
<div class="a" style="left:163px;top:434px;width:21px;height:10px;overflow:hidden"><div class="a" style="left:5.4px;top:-3.3px;width:10px;height:10px;border-radius:50%;background:#e53935;border:1px solid #fff"></div></div>
<div class="a" style="left:15px;top:539px;width:812.00px;height:5.00px;background:#3c3c3c;"></div>
<div class="a" style="left:15px;top:539px;width:95.70px;height:5.00px;background:#5a5a5a;border-radius:2.5px"></div>

<div class="t" style="left:56.00px;top:21.31px;font-size:6.95px;color:#e6e6e6;font-weight:400;transform:scaleX(0.944);">Wan2.2 Keyframe</div>
<div class="t" style="left:103.71px;top:44.31px;font-size:8.93px;color:#e3e3e3;font-weight:400;transform:scaleX(0.885);">localhost:5173</div>
<div class="t" style="left:765.09px;top:45.23px;font-size:7.76px;color:#e3e3e3;font-weight:400;transform:scaleX(0.651);">シークレット</div>
<div class="t" style="left:24.73px;top:73.67px;font-size:8.33px;color:#f2f2f2;font-weight:700;transform:scaleX(0.757);-webkit-text-stroke:0.05px currentColor;">ファイル</div>
<div class="t" style="left:70.72px;top:73.89px;font-size:8.21px;color:#f2f2f2;font-weight:700;transform:scaleX(1.048);-webkit-text-stroke:0.05px currentColor;">編集</div>
<div class="t" style="left:411.19px;top:72.95px;font-size:9.47px;color:#e6e6e6;font-weight:700;transform:scaleX(0.906);-webkit-text-stroke:0.05px currentColor;">sotai</div>
<div class="t" style="left:23.00px;top:104.27px;font-size:6.83px;color:#e0e0e0;font-weight:700;transform:scaleX(1.260);-webkit-text-stroke:0.05px currentColor;">詳細設定</div>
<div class="t" style="left:22.48px;top:122.20px;font-size:7.38px;color:#a8a8a8;font-weight:400;transform:scaleX(0.765);">プロンプト</div>
<div class="t" style="left:28.60px;top:137.90px;font-size:7.71px;color:#6b6b6b;font-weight:400;transform:scaleX(0.874);">生成したい動画の内容を記述...</div>
<div class="t" style="left:22.83px;top:184.20px;font-size:6.90px;color:#a8a8a8;font-weight:400;transform:scaleX(0.781);">ネガティブプロンプト</div>
<div class="a" style="left:15.0px;top:395.0px;width:170.0px;height:10.0px;overflow:hidden"><div class="t" style="left:7.12px;top:6.52px;font-size:7.57px;color:#a8a8a8;font-weight:400;transform:scaleX(1.028);">フェード幅</div></div>
<div class="a" style="left:15.0px;top:395.0px;width:170.0px;height:10.0px;overflow:hidden"><div class="t" style="left:87.21px;top:6.90px;font-size:7.18px;color:#a8a8a8;font-weight:400;transform:scaleX(1.053);">最小不透明度</div></div>
<div class="t" style="left:22.52px;top:233.56px;font-size:6.74px;color:#a8a8a8;font-weight:400;transform:scaleX(1.142);">開始画像</div>
<div class="t" style="left:102.40px;top:233.55px;font-size:6.92px;color:#a8a8a8;font-weight:400;transform:scaleX(1.098);">終了画像</div>
<div class="t" style="left:22.30px;top:365.33px;font-size:6.74px;color:#a8a8a8;font-weight:400;transform:scaleX(0.887);">アスペクト比</div>
<div class="t" style="left:102.40px;top:365.50px;font-size:6.56px;color:#a8a8a8;font-weight:400;transform:scaleX(1.152);">解像度</div>
<div class="t" style="left:30.49px;top:380.11px;font-size:8.57px;color:#eeeeee;font-weight:400;transform:scaleX(0.787);">1:1</div>
<div class="t" style="left:108.05px;top:380.11px;font-size:8.57px;color:#eeeeee;font-weight:400;transform:scaleX(0.862);">1024</div>
<div class="t" style="left:203.41px;top:107.60px;font-size:9.60px;color:#e8e8e8;font-weight:700;transform:scaleX(0.819);-webkit-text-stroke:0.05px currentColor;">キーフレームプレビュー</div>
<div class="t" style="left:368.88px;top:108.07px;font-size:8.34px;color:#dddddd;font-weight:400;transform:scaleX(0.739);">フィルモード</div>
<div class="t" style="left:431.50px;top:108.20px;font-size:10.80px;color:#e8e8e8;font-weight:700;transform:scaleX(0.809);-webkit-text-stroke:0.05px currentColor;">動画プレビュー</div>
<div class="t" style="left:582.22px;top:109.70px;font-size:8.00px;color:#f0f0f0;font-weight:700;transform:scaleX(0.800);-webkit-text-stroke:0.05px currentColor;">ダウンロード</div>
<div class="t" style="left:509.17px;top:383.44px;font-size:8.37px;color:#9a9a9a;font-weight:400;transform:scaleX(0.748);">フレーム 7 - 0.69s</div>
<div class="t" style="left:660.19px;top:100.87px;font-size:8.23px;color:#dddddd;font-weight:700;transform:scaleX(0.822);-webkit-text-stroke:0.05px currentColor;">アセット</div>
<div class="t" style="left:726.68px;top:131.70px;font-size:7.90px;color:#d0d0d0;font-weight:400;transform:scaleX(1.059);">画像を追加</div>
<div class="t" style="left:693.00px;top:172.39px;font-size:8.11px;color:#e6e6e6;font-weight:400;transform:scaleX(0.907);">frame_0001.png</div>
<div class="t" style="left:693.00px;top:212.39px;font-size:8.11px;color:#e6e6e6;font-weight:400;transform:scaleX(0.907);">frame_0002.png</div>
<div class="t" style="left:693.00px;top:252.39px;font-size:8.11px;color:#e6e6e6;font-weight:400;transform:scaleX(0.907);">frame_0006.png</div>
<div class="t" style="left:693.00px;top:292.39px;font-size:8.11px;color:#e6e6e6;font-weight:400;transform:scaleX(0.907);">frame_0007.png</div>
<div class="t" style="left:693.00px;top:332.39px;font-size:8.11px;color:#e6e6e6;font-weight:400;transform:scaleX(0.907);">frame_0008.png</div>
<div class="t" style="left:693.00px;top:372.39px;font-size:8.11px;color:#e6e6e6;font-weight:400;transform:scaleX(0.907);">frame_0010.png</div>
<div class="t" style="left:20.23px;top:417.82px;font-size:7.58px;color:#9a9a9a;font-weight:400;transform:scaleX(0.977);">開始: 0f</div>
<div class="t" style="left:53.50px;top:417.81px;font-size:7.78px;color:#9a9a9a;font-weight:400;transform:scaleX(0.920);">終了: 51f</div>
<div class="t" style="left:89.80px;top:417.81px;font-size:7.78px;color:#9a9a9a;font-weight:400;transform:scaleX(0.775);">総フレーム: 51f</div>
<div class="t" style="left:139.84px;top:418.02px;font-size:7.38px;color:#9a9a9a;font-weight:400;transform:scaleX(0.963);">時間: 3.2s</div>
<div class="t" style="left:387.50px;top:418.25px;font-size:7.50px;color:#ffffff;font-weight:700;transform:scaleX(1.114);-webkit-text-stroke:0.05px currentColor;">再生</div>
<div class="t" style="left:433.10px;top:418.25px;font-size:7.50px;color:#ffffff;font-weight:700;transform:scaleX(1.154);-webkit-text-stroke:0.05px currentColor;">動画生成</div>
<div class="t" style="left:672.77px;top:417.30px;font-size:8.00px;color:#9a9a9a;font-weight:400;transform:scaleX(0.720);">スケール:</div>
<div class="t" style="left:807.03px;top:416.87px;font-size:8.86px;color:#9a9a9a;font-weight:400;transform:scaleX(0.826);">23</div>
<div class="t" style="left:244.82px;top:450.59px;font-size:7.43px;color:#8d9bb0;font-weight:400;transform:scaleX(1.037);">16</div>
<div class="t" style="left:474.22px;top:450.59px;font-size:7.43px;color:#8d9bb0;font-weight:400;transform:scaleX(1.011);">32</div>
<div class="t" style="left:703.72px;top:450.59px;font-size:7.43px;color:#8d9bb0;font-weight:400;transform:scaleX(0.987);">48</div>
</div></div>
</body></html>
